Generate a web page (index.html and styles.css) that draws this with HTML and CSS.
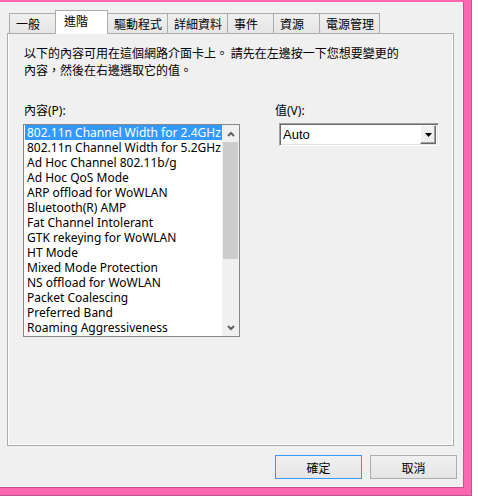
FILE: index.html
```html
<!DOCTYPE html>
<html lang="zh-Hant">
<head>
  <meta charset="UTF-8" />
  <title>內容</title>
  <link rel="stylesheet" href="styles.css">
</head>
<body>
  <div class="frame">
    <div class="dialog">
      <div class="tabs">
        <div class="tab">一般</div>
        <div class="tab active">進階</div>
        <div class="tab">驅動程式</div>
        <div class="tab">詳細資料</div>
        <div class="tab">事件</div>
        <div class="tab">資源</div>
        <div class="tab">電源管理</div>
      </div>

      <div class="panel">
        <p class="intro">以下的內容可用在這個網路介面卡上。 請先在左邊按一下您想要變更的<br>內容，然後在右邊選取它的值。</p>

        <div class="columns">
          <div class="left-col">
            <div class="label">內容(P):</div>
            <div class="listbox">
              <ul class="items">
                <li class="selected">802.11n Channel Width for 2.4GHz</li>
                <li>802.11n Channel Width for 5.2GHz</li>
                <li>Ad Hoc Channel 802.11b/g</li>
                <li>Ad Hoc QoS Mode</li>
                <li>ARP offload for WoWLAN</li>
                <li>Bluetooth(R) AMP</li>
                <li>Fat Channel Intolerant</li>
                <li>GTK rekeying for WoWLAN</li>
                <li>HT Mode</li>
                <li>Mixed Mode Protection</li>
                <li>NS offload for WoWLAN</li>
                <li>Packet Coalescing</li>
                <li>Preferred Band</li>
                <li>Roaming Aggressiveness</li>
              </ul>
              <div class="scrollbar">
                <div class="arrow">
                  <svg width="8" height="6" viewBox="0 0 8 6"><polyline points="1,5 4,2 7,5" fill="none" stroke="#606060" stroke-width="2"/></svg>
                </div>
                <div class="thumb"></div>
                <div class="track"></div>
                <div class="arrow">
                  <svg width="8" height="6" viewBox="0 0 8 6"><polyline points="1,1 4,4 7,1" fill="none" stroke="#606060" stroke-width="2"/></svg>
                </div>
              </div>
            </div>
          </div>

          <div class="right-col">
            <div class="label">值(V):</div>
            <div class="combo">
              <span class="combo-text">Auto</span>
              <span class="combo-button">
                <svg width="7" height="4" viewBox="0 0 7 4"><polygon points="0,0 7,0 3.5,4" fill="#000"/></svg>
              </span>
            </div>
          </div>
        </div>
      </div>

      <div class="actions">
        <button class="btn default">確定</button>
        <button class="btn">取消</button>
      </div>
    </div>
  </div>
</body>
</html>
```

FILE: styles.css
```css
* {
  margin: 0;
  padding: 0;
  box-sizing: border-box;
}

body {
  background: #ffffff;
  font-family: "Noto Sans", "Noto Sans CJK TC", sans-serif;
  font-size: 12px;
  color: #000;
}

.frame {
  width: 472px;
  height: 496px;
  background: #fd67b1;
  padding-top: 2px;
  border-right: 1px solid #c4528c;
  border-bottom: 1px solid #c4528c;
}

.dialog {
  width: 464px;
  height: 486px;
  background: #f0f0f0;
  border-right: 1px solid #c4528c;
  border-bottom: 1px solid #c4528c;
  display: flex;
  flex-direction: column;
}

/* tabs */
.tabs {
  display: flex;
  align-items: flex-end;
  height: 32px;
  padding: 8px 0 0 9px;
  position: relative;
  z-index: 1;
}

.tab {
  min-width: 47px;
  height: 20px;
  margin-bottom: 1px;
  margin-left: -1px;
  padding: 0 5px 0 6px;
  line-height: 19px;
  border: 1px solid #acacac;
  border-bottom: none;
  background: linear-gradient(#f0f0f0, #e5e5e5);
  white-space: nowrap;
  font-family: "Noto Sans CJK TC", sans-serif;
}

.tab:first-child {
  margin-left: 0;
}

.tab.active {
  min-width: 53px;
  height: 24px;
  margin-bottom: 0;
  padding: 1px 5px 0 8px;
  line-height: 17px;
  background: #ffffff;
}

/* page */
.panel {
  margin: -1px 0 0 7px;
  width: 447px;
  height: 413px;
  border: 1px solid #acacac;
  box-shadow: inset 1px -1px 0 #ffffff, inset -1px 0 0 #ffffff;
  padding: 10px 0 0 15px;
}

.intro {
  padding-left: 1px;
  line-height: 17px;
  white-space: nowrap;
  font-family: "Noto Sans CJK TC", sans-serif;
}

.columns {
  display: flex;
  gap: 35px;
  margin-top: 24px;
}

.label {
  padding-left: 1px;
  line-height: 17px;
}

.listbox {
  display: flex;
  margin-top: 5px;
  width: 217px;
  height: 213px;
  border: 1px solid #828790;
  background: #ffffff;
}

.items {
  list-style: none;
  flex: 1;
  padding-left: 1px;
  overflow: hidden;
}

.items li {
  height: 15px;
  line-height: 15px;
  padding-left: 2px;
  white-space: nowrap;
  overflow: hidden;
}

.items li.selected {
  background: #3399ff;
  color: #ffffff;
}

.scrollbar {
  width: 17px;
  display: flex;
  flex-direction: column;
  background: #f0f0f0;
}

.arrow {
  height: 17px;
  display: flex;
  align-items: center;
  justify-content: center;
}

.thumb {
  height: 117px;
  margin: 0 1px;
  background: #cdcdcd;
}

.track {
  flex: 1;
}

/* value combo */
.right-col .label {
  padding-left: 0;
}

.combo {
  display: flex;
  align-items: center;
  margin: 4px 0 0 4px;
  width: 160px;
  height: 23px;
  background: #ffffff;
  border: 1px solid;
  border-color: #a0a0a0 #ffffff #ffffff #a0a0a0;
  box-shadow: inset 1px 1px 0 #696969, inset -1px -1px 0 #e3e3e3;
  padding: 2px 2px 2px 3px;
}

.combo-text {
  flex: 1;
  font-family: "Liberation Sans", Arial, sans-serif;
  font-size: 13px;
}

.combo-button {
  width: 16px;
  height: 19px;
  display: flex;
  align-items: center;
  justify-content: center;
  background: #f0f0f0;
  border: 1px solid;
  border-color: #ffffff #696969 #696969 #ffffff;
  box-shadow: inset -1px -1px 0 #a0a0a0;
}

/* bottom buttons */
.actions {
  display: flex;
  justify-content: flex-end;
  gap: 8px;
  margin: 9px 6px 0 0;
}

.btn {
  width: 87px;
  height: 24px;
  border: 1px solid #acacac;
  background: linear-gradient(#f0f0f0, #e5e5e5);
  font-family: "Noto Sans CJK TC", sans-serif;
  font-size: 12px;
  color: #000;
}

.btn.default {
  border-color: #3399ff;
}
```
